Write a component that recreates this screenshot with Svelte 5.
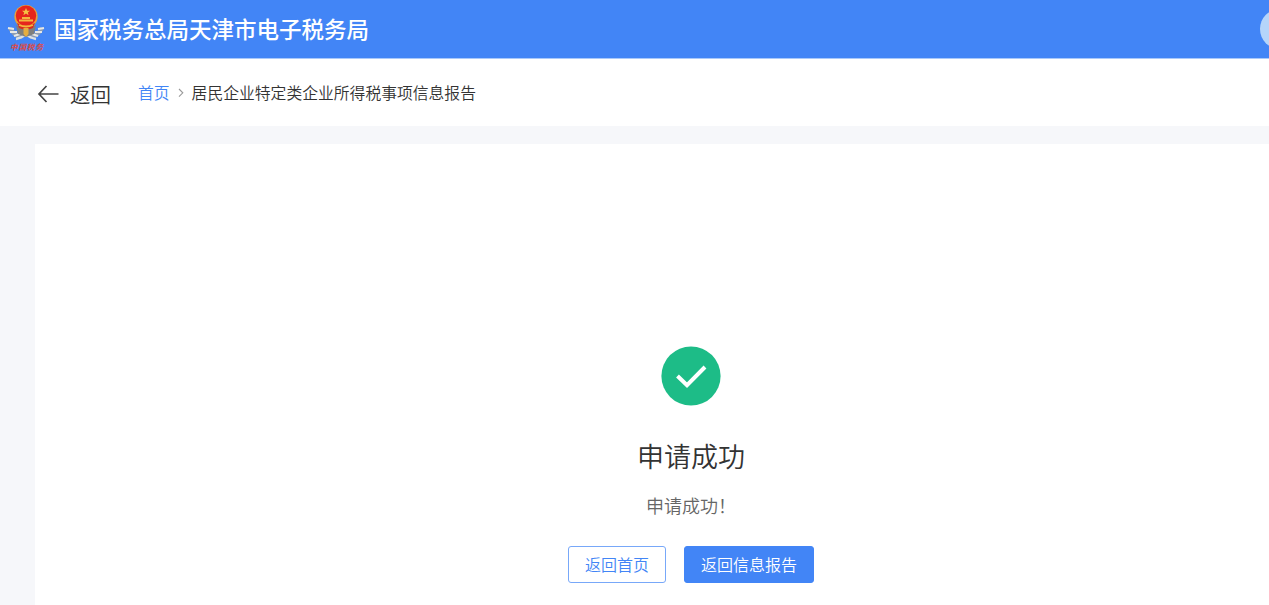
<script lang="ts">
  const siteName = '国家税务总局天津市电子税务局';
  const pageName = '居民企业特定类企业所得税事项信息报告';
  const message = '申请成功';
</script>

<div class="page">
  <header class="header">
    <svg class="header__logo" viewBox="0 0 38 48" aria-hidden="true">
      <path d="M3 24 Q7 32 15 33 M35 24 Q31 32 23 33" fill="none" stroke="#8d9bb0" stroke-width="4" />
      <path d="M1 24 L7 25 M3 28 L10 28 M7 32 L13 30 M37 24 L31 25 M35 28 L28 28 M31 32 L25 30" stroke="#e7e8e5" stroke-width="2" />
      <path d="M9 35 Q15 34 19 30 Q23 34 29 35" fill="none" stroke="#dce1e4" stroke-width="2.4" />
      <path d="M9 21 L19 27 L29 21 L27 30 L19 33 L11 30Z" fill="#80807c" />
      <circle cx="19" cy="12.5" r="11.6" fill="#e8a13a" />
      <circle cx="19" cy="11.8" r="10.2" fill="#e6251d" />
      <path d="M10 19 Q19 24 28 19 L26 24 Q19 27 12 24Z" fill="#d92c1c" />
      <path d="M12 16.5 H26 M15 14 H23 M12 21 Q19 24 26 21" fill="none" stroke="#f3b640" stroke-width="1.8" />
      <path d="M19 4 L20.2 6.8 H23 L20.8 8.5 L21.6 11.2 L19 9.6 L16.4 11.2 L17.2 8.5 L15 6.8 H17.8Z" fill="#f5c344" />
      <path d="M16.5 24 H21.5 V30 L19 33 L16.5 30Z" fill="#e5ae3f" />
      <text x="3" y="45.5" textLength="33">中国税务</text>
    </svg>
    <h1 class="header__title">{siteName}</h1>
    <span class="header__avatar"></span>
  </header>

  <nav class="nav">
    <a class="nav__back" href="#back">
      <svg class="nav__arrow" viewBox="0 0 22 18" aria-hidden="true">
        <path d="M21.5 9 H2 M9.5 1 L2 9 L9.5 17" />
      </svg>
      <span>返回</span>
    </a>
    <a class="nav__home" href="#home">首页</a>
    <svg class="nav__chevron" viewBox="0 0 6 10" aria-hidden="true">
      <path d="M1 1 L4.8 4.8 L1 8.6" />
    </svg>
    <span class="nav__current">{pageName}</span>
  </nav>

  <main class="content">
    <section class="result">
      <svg class="result__icon" viewBox="0 0 60 60" aria-hidden="true">
        <circle cx="30" cy="30" r="29.6" />
        <path d="M16.5 30 L26 39.2 L44 21" />
      </svg>
      <h2 class="result__title">{message}</h2>
      <p class="result__text">{message}！</p>
      <div class="result__actions">
        <button class="button">返回首页</button>
        <button class="button button--primary">返回信息报告</button>
      </div>
    </section>
  </main>
</div>

<style>
  :global(body) {
    background: #f6f7fa;
  }

  .page {
    height: 605px;
    overflow: hidden;
    display: flex;
    flex-direction: column;
    background: #f6f7fa;
    font-family: 'Noto Sans CJK SC', sans-serif;
    font-weight: 350;
    color: #333;
  }

  .header {
    box-sizing: border-box;
    flex: none;
    height: 59px;
    display: flex;
    align-items: center;
    padding-left: 7px;
    background: #4285f6;
    border-bottom: 1px solid #a9c9fb;
  }

  .header__logo {
    width: 38px;
    height: 48px;
    margin-top: -2px;
  }

  .header__logo text {
    font-family: 'Noto Sans CJK SC', sans-serif;
    font-size: 7.8px;
    font-style: italic;
    font-weight: 700;
    fill: #dc4a48;
  }

  .header__title {
    margin: 0 0 3px 9px;
    font-size: 22.5px;
    font-weight: 500;
    line-height: 32px;
    color: #fff;
    white-space: nowrap;
  }

  .header__avatar {
    flex: none;
    width: 40px;
    height: 40px;
    margin: 0 -31px 0 auto;
    border-radius: 50%;
    background: #b5d5fa;
  }

  .nav {
    box-sizing: border-box;
    flex: none;
    height: 67px;
    display: flex;
    align-items: center;
    padding: 0 0 0 37px;
    background: #fff;
    font-size: 15.8px;
    white-space: nowrap;
  }

  .nav__back {
    display: flex;
    align-items: center;
    padding-top: 2px;
    font-size: 20.5px;
    color: #333;
    text-decoration: none;
  }

  .nav__arrow {
    width: 22px;
    height: 18px;
    margin-right: 11px;
    fill: none;
    stroke: #444;
    stroke-width: 1.7;
  }

  .nav__home {
    margin-left: 27px;
    color: #4285f6;
    text-decoration: none;
  }

  .nav__chevron {
    width: 6px;
    height: 10px;
    margin: 0 8px;
    fill: none;
    stroke: #999;
    stroke-width: 1.1;
  }

  .content {
    flex: 1;
    padding: 18px 0 0 35px;
  }

  /* The panel runs past the right edge of the window. */
  .result {
    box-sizing: border-box;
    width: 1312px;
    height: 100%;
    display: flex;
    flex-direction: column;
    align-items: center;
    padding-top: 202px;
    background: #fff;
  }

  .result__icon {
    flex: none;
    width: 60px;
    height: 60px;
  }

  .result__icon circle {
    fill: #1dbc87;
  }

  .result__icon path {
    fill: none;
    stroke: #fff;
    stroke-width: 4;
  }

  .result__title {
    margin: 30px 0 0;
    font-size: 27px;
    font-weight: 350;
    line-height: 40px;
  }

  .result__text {
    margin: 14px 0 0;
    font-size: 18px;
    line-height: 30px;
    color: #666;
  }

  .result__actions {
    display: flex;
    gap: 18px;
    margin-top: 26px;
  }

  .button {
    box-sizing: border-box;
    height: 37px;
    padding: 0 16px 1px;
    border: 1px solid #78a8f9;
    border-radius: 3px;
    background: #fff;
    font-family: inherit;
    font-size: 16px;
    font-weight: 350;
    color: #4285f6;
    white-space: nowrap;
  }

  .button--primary {
    border-color: #4285f6;
    background: #4285f6;
    color: #fff;
  }
</style>
